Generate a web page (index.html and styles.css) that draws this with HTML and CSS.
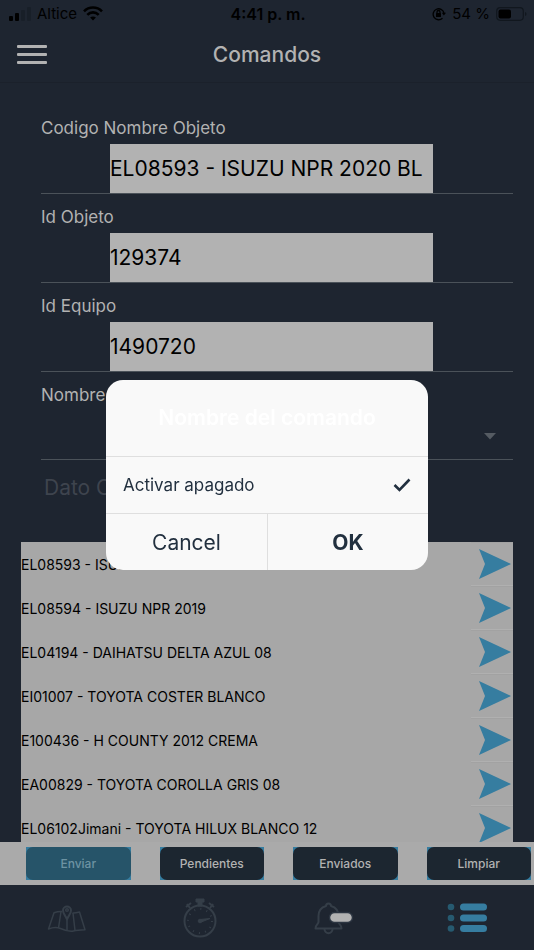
FILE: index.html
```html
<!DOCTYPE html>
<html lang="es">
<head>
  <meta charset="UTF-8">
  <meta name="viewport" content="width=device-width, initial-scale=1.0">
  <title>Comandos</title>
  <link rel="stylesheet" href="styles.css">
</head>
<body>

  <div class="status-bar">
    <div class="status-left">
      <svg width="22" height="14" viewBox="0 0 22 14">
        <rect x="0" y="9" width="4" height="5" rx="1" fill="#000"/>
        <rect x="6" y="6" width="4" height="8" rx="1" fill="#000"/>
        <rect x="12" y="3" width="4" height="11" rx="1" fill="#181f28"/>
        <rect x="18" y="0" width="4" height="14" rx="1" fill="#181f28"/>
      </svg>
      <span>Altice</span>
      <svg width="20" height="15" viewBox="0 0 20 15" fill="none" stroke="#000" stroke-width="2.6">
        <path d="M1 5.3C6 .3 14 .3 19 5.3"/>
        <path d="M4.3 8.8c3.2-3.2 8.200-3.200 11.400 0"/>
        <path d="M10 14.500l-2.900-3c1.700-1.500 4.100-1.500 5.800 0z" fill="#000" stroke="none"/>
      </svg>
    </div>
    <div class="status-time">4:41 p. m.</div>
    <div class="status-right">
      <svg width="14" height="14" viewBox="0 0 14 14" fill="none" stroke="#000" stroke-width="1.300">
        <path d="M10.500 11.200A5.500 5.500 0 1 1 12 6"/>
        <path d="M9.800 5.800h4.200l-2.100 2.700z" fill="#000" stroke="none"/>
        <rect x="4" y="6" width="5" height="4" rx=".5" fill="#000" stroke="none"/>
        <path d="M5 6.300V5a1.500 1.500 0 0 1 3 0v1.300"/>
      </svg>
      <span>54 %</span>
      <svg width="31" height="14" viewBox="0 0 31 14">
        <rect x=".7" y=".7" width="26.600" height="12.600" rx="3.500" fill="none" stroke="#11171e" stroke-width="1.200"/>
        <rect x="2.500" y="2.500" width="12.500" height="9" rx="2" fill="#000"/>
        <path d="M29 5c2 .8 2 3.200 0 4z" fill="#11171e"/>
      </svg>
    </div>
  </div>

  <header class="toolbar">
    <button type="button" class="menu-button" aria-label="Menu">
      <span></span><span></span><span></span>
    </button>
    <h1>Comandos</h1>
  </header>

  <main class="content">
    <form class="command-form">
      <div class="field">
        <label for="codigo">Codigo Nombre Objeto</label>
        <div class="field-body">
          <input type="text" id="codigo" value="EL08593 - ISUZU NPR 2020 BL">
        </div>
      </div>
      <div class="field">
        <label for="objeto">Id Objeto</label>
        <div class="field-body">
          <input type="text" id="objeto" value="129374">
        </div>
      </div>
      <div class="field">
        <label for="equipo">Id Equipo</label>
        <div class="field-body">
          <input type="text" id="equipo" value="1490720">
        </div>
      </div>
      <div class="field field-select">
        <label for="comando">Nombre</label>
        <div class="select-body">
          <select id="comando"><option value=""></option></select>
          <svg width="12" height="7" viewBox="0 0 12 7"><path d="M0 0h12L6 6.500z" fill="#555b62"/></svg>
        </div>
      </div>
      <input type="text" class="dato" placeholder="Dato C" aria-label="Dato">
    </form>

    <ul class="objects">
      <li><span>EL08593 - ISUZU</span><button type="button" aria-label="Enviar"><svg viewBox="0 0 32 30"><path d="M0 0l32 15L0 30l6-15z"/></svg></button></li>
      <li><span>EL08594 - ISUZU NPR 2019</span><button type="button" aria-label="Enviar"><svg viewBox="0 0 32 30"><path d="M0 0l32 15L0 30l6-15z"/></svg></button></li>
      <li><span>EL04194 - DAIHATSU DELTA AZUL 08</span><button type="button" aria-label="Enviar"><svg viewBox="0 0 32 30"><path d="M0 0l32 15L0 30l6-15z"/></svg></button></li>
      <li><span>EI01007 - TOYOTA COSTER BLANCO</span><button type="button" aria-label="Enviar"><svg viewBox="0 0 32 30"><path d="M0 0l32 15L0 30l6-15z"/></svg></button></li>
      <li><span>E100436 - H COUNTY 2012 CREMA</span><button type="button" aria-label="Enviar"><svg viewBox="0 0 32 30"><path d="M0 0l32 15L0 30l6-15z"/></svg></button></li>
      <li><span>EA00829 - TOYOTA COROLLA GRIS 08</span><button type="button" aria-label="Enviar"><svg viewBox="0 0 32 30"><path d="M0 0l32 15L0 30l6-15z"/></svg></button></li>
      <li><span>EL06102Jimani - TOYOTA HILUX BLANCO 12</span><button type="button" aria-label="Enviar"><svg viewBox="0 0 32 30"><path d="M0 0l32 15L0 30l6-15z"/></svg></button></li>
    </ul>
  </main>

  <div class="actions">
    <div class="action"><button type="button" class="pressed">Enviar</button></div>
    <div class="action"><button type="button">Pendientes</button></div>
    <div class="action"><button type="button">Enviados</button></div>
    <div class="action"><button type="button">Limpiar</button></div>
  </div>

  <nav class="tabs">
    <button type="button" aria-label="Mapa">
      <svg width="40" height="40" viewBox="0 0 40 40" fill="none" stroke="#353e48" stroke-width="1.500" stroke-linejoin="round">
        <path d="M15 13.500c-3-.2-5 .2-8 1.300L1.500 31c4.500-1.800 8.500-2 12-.5 4.500 2 8.500 3.500 13 2.500 3.500-.8 7-1 11.500-1.200L32.500 14c-3 .8-5 1.200-7 1"/>
        <path d="M14 13.500L11.500 30M20 22v10.500M26 15l2 17.500"/>
        <path d="M20 21.500c-1-3.500-4-5.500-4-9a4 4 0 0 1 8 0c0 3.500-3 5.500-4 9z" stroke-width="2"/>
        <circle cx="20" cy="12" r="1.300"/>
      </svg>
    </button>
    <button type="button" aria-label="Historial">
      <svg width="40" height="40" viewBox="0 0 40 40" fill="none" stroke="#353e48">
        <circle cx="20" cy="23" r="15.500" stroke-width="2"/>
        <circle cx="20" cy="23" r="12" stroke-width="2" stroke-dasharray="1 5.283"/>
        <path d="M16 1h8v3h-2v4h-4V4h-2z" fill="#353e48" stroke-width="1"/>
        <path d="M7 6l3 4M33 6l-3 4" stroke-width="2"/>
        <path d="M6 9l5-4M34 9l-5-4" stroke-width="2"/>
        <circle cx="20" cy="23" r="1.800" fill="#353e48"/>
        <path d="M20 21.500l10-1-10 4z" fill="#353e48" stroke-width="1"/>
      </svg>
    </button>
    <button type="button" aria-label="Alertas">
      <svg width="40" height="40" viewBox="0 0 40 40" fill="none" stroke="#353e48" stroke-width="2" stroke-linejoin="round">
        <path d="M12 8c0-3.500 5-3.500 5 0 5 1.500 7.500 5 7.500 10v6c0 2 3 2.500 3 6.500H1.500c0-4 3-4.500 3-6.500v-6c0-5 2.500-8.500 7.500-10z"/>
        <path d="M10.500 31c0 5.500 8 5.500 8 0"/>
        <rect x="15.500" y="14.500" width="23" height="10" rx="5" fill="#b2b2b2" stroke="#2c3541" stroke-width="1.500"/>
      </svg>
    </button>
    <button type="button" aria-label="Comandos">
      <svg width="40" height="40" viewBox="0 0 40 40">
        <g fill="#265a70"><circle cx="4" cy="9" r="3.300"/><circle cx="4" cy="20" r="3.300"/><circle cx="4" cy="30.500" r="3.300"/></g>
        <g fill="#367da0"><rect x="13" y="5.500" width="27" height="7" rx="3.500"/><rect x="13" y="16.500" width="27" height="7" rx="3.500"/><rect x="13" y="27" width="27" height="7" rx="3.500"/></g>
      </svg>
    </button>
  </nav>

  <div class="alert-wrapper">
    <form class="alert" role="dialog" aria-labelledby="alert-title">
      <h2 id="alert-title">Nombre del comando</h2>
      <label class="alert-option">
        <input type="radio" name="comando" checked>
        <span>Activar apagado</span>
        <svg width="18" height="14" viewBox="0 0 18 14" fill="none" stroke="#22303f" stroke-width="2.600"><path d="M1.500 7l5 5L16.500 1.500"/></svg>
      </label>
      <div class="alert-buttons">
        <button type="button">Cancel</button>
        <button type="button" class="ok">OK</button>
      </div>
    </form>
  </div>

</body>
</html>
```
FILE: styles.css
```css
* {
  box-sizing: border-box;
}

body {
  margin: 0;
  height: 100vh;
  display: flex;
  flex-direction: column;
  background-color: #1e2530;
  color: #b2b2b2;
  font-family: Inter, "Liberation Sans", sans-serif;
  overflow: hidden;
}

button, input, select {
  margin: 0;
  padding: 0;
  border: none;
  background: none;
  color: inherit;
  font-family: inherit;
}

/* status bar */
.status-bar {
  height: 27px;
  flex: none;
  display: grid;
  grid-template-columns: 1fr auto 1fr;
  align-items: center;
  padding: 0 7px 0 9px;
  color: #000;
  font-size: 15px;
}

.status-left, .status-right {
  display: flex;
  align-items: center;
  gap: 6px;
}

.status-right {
  justify-content: flex-end;
}

.status-time {
  font-size: 16px;
  font-weight: 600;
}

/* toolbar */
.toolbar {
  height: 56px;
  flex: none;
  display: grid;
  grid-template-columns: 30px 1fr 30px;
  align-items: center;
  padding: 0 17px;
  border-bottom: 1px solid #1b212b;
}

.toolbar h1 {
  margin: 0;
  font-size: 21px;
  font-weight: 500;
  text-align: center;
}

.menu-button {
  display: flex;
  flex-direction: column;
  gap: 5px;
}

.menu-button span {
  width: 30px;
  height: 3px;
  border-radius: 1px;
  background-color: #b2b2b2;
}

/* form */
.content {
  flex: 1;
  min-height: 0;
  display: flex;
  flex-direction: column;
  padding: 22px 21px 0;
}

.command-form {
  flex: none;
  padding-left: 20px;
}

.field {
  padding-top: 13px;
  border-bottom: 1px solid #4b5259;
}

.field label {
  display: block;
  margin-bottom: 6px;
  font-size: 17px;
  line-height: 20px;
}

.field-body {
  display: flex;
  padding: 0 80px 0 69px;
}

.field-body input {
  flex: 1;
  min-width: 0;
  height: 49px;
  background-color: #b2b2b2;
  color: #000;
  font-size: 21px;
}

.select-body {
  height: 48px;
  display: flex;
  align-items: center;
  padding: 2px 17px 0 0;
}

.select-body select {
  flex: 1;
  height: 46px;
  appearance: none;
}

.dato {
  display: block;
  width: 100%;
  height: 54px;
  margin-bottom: 28px;
  padding-left: 3px;
  font-size: 21px;
}

.dato::placeholder {
  color: #3e444e;
  opacity: 1;
}

/* list */
.objects {
  flex: 1;
  min-height: 0;
  margin: 0;
  padding: 0;
  list-style: none;
  overflow: hidden;
  background-color: #a7a7a7;
  color: #000;
  font-size: 14px;
}

.objects li {
  display: flex;
  align-items: center;
  justify-content: space-between;
  height: 44px;
}

.objects button {
  width: 42px;
  height: 44px;
  display: flex;
  align-items: center;
  justify-content: flex-end;
  padding-right: 2px;
  border-top: 1px solid #a2a2a2;
  border-bottom: 1px solid #b0b0b0;
}

.objects svg {
  width: 32px;
  height: 30px;
  fill: #367da0;
}

/* buttons */
.actions {
  flex: none;
  display: grid;
  grid-template-columns: repeat(4, 1fr);
  padding: 5px 0;
  background-color: #aaaaaa;
}

.action {
  display: flex;
  margin: 0 3px 0 26px;
  background-color: #367da0;
}

.action button {
  flex: 1;
  height: 33px;
  border-radius: 7px;
  background-color: #1c2630;
  font-size: 12px;
  font-weight: 500;
}

.action .pressed {
  background-color: #265469;
  color: #6d93a3;
}

/* tabs */
.tabs {
  flex: none;
  height: 65px;
  display: grid;
  grid-template-columns: repeat(4, 1fr);
}

.tabs button {
  display: flex;
  align-items: center;
  justify-content: center;
}

/* alert */
.alert-wrapper {
  position: fixed;
  inset: 0;
  display: flex;
  align-items: center;
  justify-content: center;
}

.alert {
  width: 60%;
  min-width: 322px;
  border-radius: 17px;
  background-color: #f9f9f9;
  color: #22303f;
  overflow: hidden;
}

.alert h2 {
  margin: 0;
  height: 76px;
  line-height: 76px;
  color: #fff;
  font-size: 21px;
  font-weight: 600;
  text-align: center;
}

.alert-option {
  height: 57px;
  display: flex;
  align-items: center;
  justify-content: space-between;
  padding: 0 17px;
  border-top: 1px solid #dfdfdf;
  font-size: 17px;
}

.alert-option input {
  position: absolute;
  opacity: 0;
}

.alert-buttons {
  display: grid;
  grid-template-columns: 1fr 1fr;
  border-top: 1px solid #dfdfdf;
}

.alert-buttons button {
  height: 56px;
  font-size: 21px;
}

.alert-buttons .ok {
  border-left: 1px solid #dfdfdf;
  font-weight: 700;
}
```
